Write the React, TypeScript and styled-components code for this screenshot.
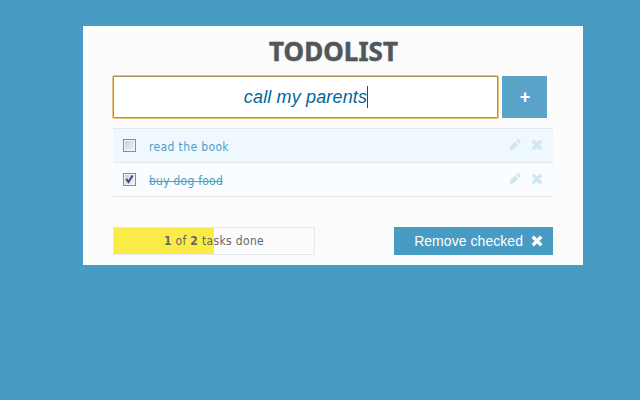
import React, { useState } from "react";
import styled, { createGlobalStyle } from "styled-components";

const GlobalStyle = createGlobalStyle`
  * { box-sizing: border-box; }
  html, body { margin: 0; padding: 0; }
  body { background: #489bc2; font-family: "DejaVu Sans Condensed", "DejaVu Sans", sans-serif; font-stretch: condensed; overflow: hidden; }
  button { font: inherit; border: 0; padding: 0; background: none; cursor: pointer; }
`;

const Page = styled.main`
  height: 400px;
  padding: 26px 57px 0 83px;
`;

const Panel = styled.section`
  display: flex;
  flex-direction: column;
  height: 239px;
  padding: 0 30px 10px;
  background: #fcfcfd;
`;

const Title = styled.h1`
  height: 50px;
  margin: 0;
  padding-left: 1px;
  color: #555;
  font: bold 26px/51px "Noto Sans", sans-serif;
  letter-spacing: 0.05px;
  text-align: center;
  text-shadow: 0 0 2px #b4dcee;
  -webkit-text-stroke: 0.4px #555;
`;

const AddBar = styled.form`
  display: flex;
  gap: 4px;
  height: 42px;
`;

const Field = styled.div`
  display: flex;
  align-items: center;
  justify-content: center;
  width: 385px;
  padding-left: 1px;
  border: 1px solid #a1975e;
  border-radius: 1px;
  box-shadow: 0 0 0 1px #e9c275;
  background: #fff;
  color: #00679a;
  font: italic 18px/22px "Liberation Sans", Arial, sans-serif;
  letter-spacing: 0.15px;
`;

const Caret = styled.span`
  width: 1px;
  height: 22px;
  background: #00567f;
`;

const AddButton = styled.button`
  && {
    width: 45px;
    padding-left: 1px;
    background: #5aa3c9;
    color: #fff;
    font: bold 18px/40px "Liberation Sans", Arial, sans-serif;
  }
`;

const List = styled.ul`
  margin: 10px 0 0;
  padding: 0;
  list-style: none;
  border-top: 1px solid #e1e8ec;
`;

const Row = styled.li<{ $tinted: boolean }>`
  display: flex;
  align-items: center;
  height: 34px;
  padding: 0 10px;
  border-bottom: 1px solid #e1e8ec;
  background: ${(p) => (p.$tinted ? "#f0f8ff" : "#fafdff")};
`;

const Check = styled.button`
  && {
    width: 13px;
    height: 13px;
    border: 1px solid #8b8f92;
    background: linear-gradient(135deg, #c9cdd1, #f8f8f8);
    box-shadow: inset 0 0 0 1px #f4f4f4;
    display: flex;
  }
`;

const Label = styled.span<{ $done: boolean }>`
  flex: 1;
  margin-left: 13px;
  color: #4aa0c8;
  font-size: 12px;
  line-height: 16px;
  padding-top: 2px;
  letter-spacing: ${(p) => (p.$done ? "0.24px" : "0.37px")};
  text-decoration: ${(p) => (p.$done ? "line-through" : "none")};
`;

const Tools = styled.div`
  display: flex;
  gap: 10px;
  color: #d0e6f0;
  padding-bottom: 2px;
`;

const Tool = styled.button`
  && {
    display: flex;
    width: 12px;
    height: 12px;
    color: inherit;
  }
`;

const Footer = styled.footer`
  display: flex;
  justify-content: space-between;
  height: 28px;
  margin-top: auto;
`;

const Progress = styled.div<{ $ratio: number }>`
  width: 202px;
  border: 1px solid #e6e8eb;
  background: linear-gradient(
    to right,
    #faeb48 ${(p) => p.$ratio * 100}%,
    #fcfcfd ${(p) => p.$ratio * 100}%
  );
  color: #666;
  font-size: 12px;
  line-height: 26px;
  letter-spacing: 0.34px;
  text-align: center;
`;

const RemoveButton = styled.button`
  && {
    display: flex;
    align-items: center;
    justify-content: flex-end;
    gap: 8px;
    width: 159px;
    padding-right: 10px;
    background: #489bc2;
    color: #fff;
    font: 14px/28px "Liberation Sans", Arial, sans-serif;
    letter-spacing: 0.05px;
  }
`;

const Cross = () => (
  <svg width="12" height="12" viewBox="0 0 12 12" fill="currentColor">
    <path d="M2.9 .5 6 3.6 9.1 .5 11.5 2.9 8.4 6 11.5 9.1 9.1 11.5 6 8.4 2.9 11.5 .5 9.1 3.6 6 .5 2.9Z" />
  </svg>
);

const Pencil = () => (
  <svg width="12" height="12" viewBox="0 0 12 12" fill="currentColor">
    <path d="M1.2 7.2 6.1 2.4 9.2 5.5 4.6 10.2 .7 11.3Z" />
    <path d="M7 1.7 8.4 .6Q9.7 0 10.6 .9L11.1 1.4Q12 2.4 11.2 3.4L10.1 4.7Z" />
  </svg>
);

const Tick = () => (
  <svg width="11" height="11" viewBox="0 0 11 11" fill="none">
    <path d="M2.2 4.8 4.5 8 8.6 1.5" stroke="#354c91" strokeWidth="2" />
  </svg>
);

type Task = { text: string; done: boolean };

export default function App() {
  const [tasks, setTasks] = useState<Task[]>([
    { text: "read the book", done: false },
    { text: "buy dog food", done: true },
  ]);
  const done = tasks.filter((t) => t.done).length;
  const toggle = (index: number) =>
    setTasks(tasks.map((t, i) => (i === index ? { ...t, done: !t.done } : t)));

  return (
    <>
      <GlobalStyle />
      <Page>
        <Panel>
          <Title>TODOLIST</Title>
          <AddBar onSubmit={(e) => e.preventDefault()}>
            <Field>
              call my parents
              <Caret />
            </Field>
            <AddButton>+</AddButton>
          </AddBar>
          <List>
            {tasks.map((task, i) => (
              <Row key={task.text} $tinted={i % 2 === 0}>
                <Check role="checkbox" aria-checked={task.done} onClick={() => toggle(i)}>
                  {task.done && <Tick />}
                </Check>
                <Label $done={task.done}>{task.text}</Label>
                <Tools>
                  <Tool aria-label="Edit"><Pencil /></Tool>
                  <Tool aria-label="Delete"><Cross /></Tool>
                </Tools>
              </Row>
            ))}
          </List>
          <Footer>
            <Progress $ratio={tasks.length ? done / tasks.length : 0}>
              <b>{done}</b> of <b>{tasks.length}</b> tasks done
            </Progress>
            <RemoveButton onClick={() => setTasks(tasks.filter((t) => !t.done))}>
              Remove checked <Cross />
            </RemoveButton>
          </Footer>
        </Panel>
      </Page>
    </>
  );
}
